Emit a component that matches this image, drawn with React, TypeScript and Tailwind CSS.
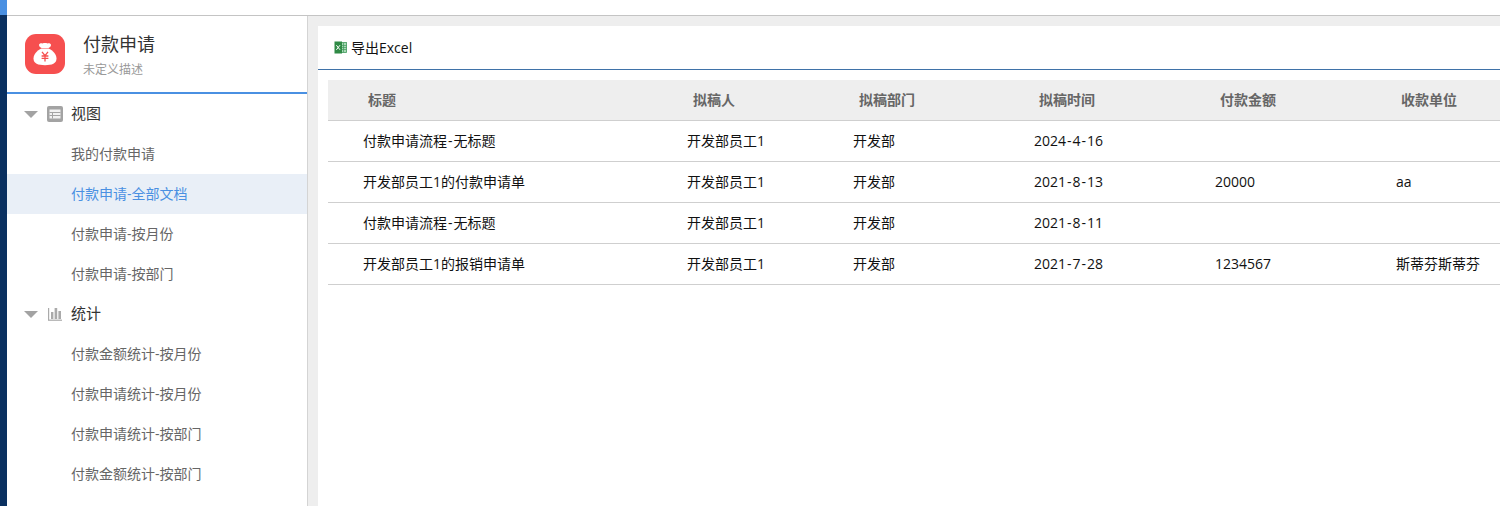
import { ReactNode } from "react";

const FONT = "font-['Open_Sans','Noto_Sans_CJK_SC',sans-serif]";

const viewLinks = ["我的付款申请", "付款申请-全部文档", "付款申请-按月份", "付款申请-按部门"];
const statLinks = ["付款金额统计-按月份", "付款申请统计-按月份", "付款申请统计-按部门", "付款金额统计-按部门"];
const headers = ["标题", "拟稿人", "拟稿部门", "拟稿时间", "付款金额", "收款单位"];
const rows = [
  ["付款申请流程-无标题", "开发部员工1", "开发部", "2024-4-16", "", ""],
  ["开发部员工1的付款申请单", "开发部员工1", "开发部", "2021-8-13", "20000", "aa"],
  ["付款申请流程-无标题", "开发部员工1", "开发部", "2021-8-11", "", ""],
  ["开发部员工1的报销申请单", "开发部员工1", "开发部", "2021-7-28", "1234567", "斯蒂芬斯蒂芬"],
];

// the hyphen sits wider in the original font
function Dashed({ text }: { text: string }) {
  const parts = text.split("-");
  return (
    <>
      {parts.map((p, i) => (
        <span key={i}>
          {i > 0 && <span className="mx-[1px]">-</span>}
          {p}
        </span>
      ))}
    </>
  );
}

function AppIcon() {
  return (
    <div className="w-10 h-10 rounded-[11px] bg-[#f64f4f] flex items-center justify-center shrink-0">
      <svg width="26" height="26" viewBox="0 0 26 26">
        <path d="M7 4 C7 2.4 9 2 10.5 2.4 C12 2 14 2 15.5 2.4 C17 2 19 2.4 19 4 C19 5.6 17.5 6.6 16.5 7 H9.5 C8.5 6.6 7 5.6 7 4 Z" fill="#fff" />
        <path d="M9.5 7.6 H16.5 C21 9.6 24.5 13.5 24.5 17.5 C24.5 22.5 20 24.2 13 24.2 C6 24.2 1.5 22.5 1.5 17.5 C1.5 13.5 5 9.6 9.5 7.6 Z" fill="#fff" />
        <path d="M10 10.8 L13 14.6 L16 10.8 M9.6 15 H16.4 M9.6 17.4 H16.4 M13 14.6 V20.4" fill="none" stroke="#f64f4f" strokeWidth="1.3" />
      </svg>
    </div>
  );
}

function GroupRow({ icon, label }: { icon: ReactNode; label: string }) {
  return (
    <div className="h-10 flex items-center pl-[17px]">
      <div className="w-0 h-0 border-x-[7px] border-x-transparent border-t-[7px] border-t-[#a3a3a3]" />
      <div className="ml-[9px] w-[16px] h-[16px] flex items-center justify-center">{icon}</div>
      <span className="ml-[8px] text-[15px] text-[#333] -translate-y-[1px]">{label}</span>
    </div>
  );
}

function NavLink({ label, active }: { label: string; active?: boolean }) {
  return (
    <div className={`h-10 flex items-center pl-[64px] pb-[2px] text-[14px] ${active ? "bg-[#e9eff7] text-[#4a90e2]" : "text-[#666]"}`}>
      {label}
    </div>
  );
}

export default function App() {
  return (
    <div className={`h-[506px] w-[1500px] overflow-hidden flex bg-white ${FONT}`}>
      <div className="w-[7px] shrink-0 flex flex-col">
        <div className="h-[15px] bg-[#4a90e2]" />
        <div className="flex-1 bg-[#0a3060]" />
      </div>
      <div className="flex-1 flex flex-col min-w-0">
        <div className="h-[16px] shrink-0 bg-white border-b border-[#c4c4c4]" />
        <div className="flex-1 flex min-h-0">
          <aside className="w-[301px] shrink-0 bg-white border-r border-[#d4d4d4]">
            <div className="h-[78px] flex items-center pl-[18px] border-b-2 border-[#4a90e2]">
              <AppIcon />
              <div className="ml-[18px] pt-[2px]">
                <div className="text-[18px] leading-[24px] text-[#333]">付款申请</div>
                <div className="text-[12px] leading-[16px] mt-[6px] text-[#999]">未定义描述</div>
              </div>
            </div>
            <GroupRow
              label="视图"
              icon={
                <svg width="16" height="16" viewBox="0 0 16 16">
                  <rect width="16" height="16" rx="2" fill="#a3a3a3" />
                  <rect x="2.5" y="3.5" width="11" height="9" fill="#f1f1f1" />
                  <path d="M2.5 6.5 H13.5 M2.5 9.5 H13.5 M5.5 6.5 V12.5" fill="none" stroke="#a3a3a3" strokeWidth="1" />
                </svg>
              }
            />
            {viewLinks.map((l, i) => (
              <NavLink key={l} label={l} active={i === 1} />
            ))}
            <GroupRow
              label="统计"
              icon={
                <svg width="16" height="16" viewBox="0 0 16 16" fill="#aaaaaa">
                  <rect x="4" y="6" width="2.4" height="7" />
                  <rect x="7.6" y="2" width="2.6" height="11" />
                  <rect x="11.4" y="5" width="2.6" height="8" />
                  <rect x="1" y="13.6" width="14" height="1.2" />
                  <rect x="1" y="2" width="1.2" height="12" />
                </svg>
              }
            />
            {statLinks.map((l) => (
              <NavLink key={l} label={l} />
            ))}
          </aside>
          <main className="flex-1 min-w-0 bg-[#eeeeee] pt-[10px] pl-[10px]">
            <div className="h-full bg-white">
              <div className="h-[44px] flex items-center pl-[16px] border-b border-[#3f72a8]">
                <svg width="13" height="13" viewBox="0 0 13 13">
                  <rect x="6" y="1.5" width="6.5" height="10" fill="#a9d8b6" stroke="#3f9a5a" strokeWidth="0.8" />
                  <path d="M9.5 2 V11 M6 4.5 H12.5 M6 6.5 H12.5 M6 8.5 H12.5" stroke="#3f9a5a" strokeWidth="0.7" />
                  <rect x="0.5" y="0.5" width="7.5" height="12" fill="#2f8a45" />
                  <path d="M2.4 4.2 L6 8.8 M6 4.2 L2.4 8.8" stroke="#fff" strokeWidth="1" />
                </svg>
                <span className="ml-[4px] text-[14px] text-[#111]">导出Excel</span>
              </div>
              <div className="pt-[10px] pl-[10px]">
                <table className="table-fixed w-[1172px] border-collapse text-[14px]">
                  <colgroup>
                    <col className="w-[324px]" />
                    <col className="w-[166px]" />
                    <col className="w-[181px]" />
                    <col className="w-[181px]" />
                    <col className="w-[181px]" />
                    <col className="w-[139px]" />
                  </colgroup>
                  <thead>
                    <tr className="h-[40px] bg-[#eeeeee] border-b border-[#cfcfcf]">
                      {headers.map((h, i) => (
                        <th key={h} className={`text-left font-bold text-[#666] ${i === 1 || i === 2 ? "pl-[41px]" : "pl-[40px]"}`}>{h}</th>
                      ))}
                    </tr>
                  </thead>
                  <tbody>
                    {rows.map((r, i) => (
                      <tr key={i} className="h-[41px] border-b border-[#cfcfcf]">
                        {r.map((c, j) => (
                          <td key={j} className="pl-[35px] text-[#111] whitespace-nowrap"><Dashed text={c} /></td>
                        ))}
                      </tr>
                    ))}
                  </tbody>
                </table>
              </div>
            </div>
          </main>
        </div>
      </div>
    </div>
  );
}
